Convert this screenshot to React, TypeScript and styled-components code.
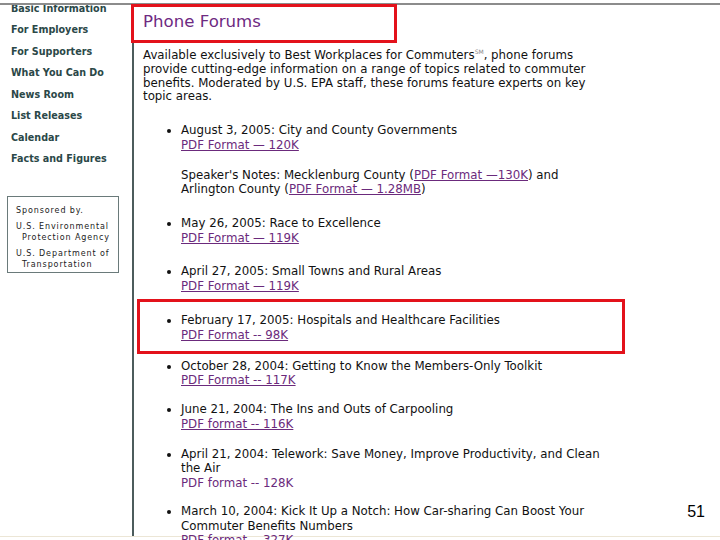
import React from 'react'
import styled, { createGlobalStyle } from 'styled-components'

const GlobalStyle = createGlobalStyle`
    html, body {
        margin: 0;
        padding: 0;
        background: #fff;
    }
`

const colors = {
    nav: '#2b4848',
    rule: '#8c8c8c',
    divider: '#4c5c5c',
    text: '#111',
    link: '#6b2a7c',
    heading: '#6e2a82',
    red: '#e3121b',
}

const navItems = [
    'Basic Information',
    'For Employers',
    'For Supporters',
    'What You Can Do',
    'News Room',
    'List Releases',
    'Calendar',
    'Facts and Figures',
]

type Forum = {
    title: string[]
    link: string
    underline?: boolean
    gap: number
    notes?: boolean
}

const forums: Forum[] = [
    { title: ['August 3, 2005: City and County Governments'], link: 'PDF Format — 120K', gap: 19, notes: true },
    { title: ['May 26, 2005: Race to Excellence'], link: 'PDF Format — 119K', gap: 19.5 },
    { title: ['April 27, 2005: Small Towns and Rural Areas'], link: 'PDF Format — 119K', gap: 19 },
    { title: ['February 17, 2005: Hospitals and Healthcare Facilities'], link: 'PDF Format -- 98K', gap: 20 },
    { title: ['October 28, 2004: Getting to Know the Members-Only Toolkit'], link: 'PDF Format -- 117K', gap: 16.5 },
    { title: ['June 21, 2004: The Ins and Outs of Carpooling'], link: 'PDF format -- 116K', gap: 14.5 },
    { title: ['April 21, 2004: Telework: Save Money, Improve Productivity, and Clean', 'the Air'], link: 'PDF format -- 128K', underline: false, gap: 15.5 },
    { title: ['March 10, 2004: Kick It Up a Notch: How Car-sharing Can Boost Your', 'Commuter Benefits Numbers'], link: 'PDF format -- 327K', gap: 14 },
]

const App: React.FC = () => {
    return (
        <Page>
            <GlobalStyle />
            <TopRule />
            <Body>
                <Sidebar>
                    <NavList>
                        {navItems.map((item) => (
                            <NavItem key={item}>{item}</NavItem>
                        ))}
                    </NavList>
                    <SponsorBox>
                        <SponsorLine>Sponsored by.</SponsorLine>
                        <SponsorLine $top={5}>U.S. Environmental</SponsorLine>
                        <SponsorLine $indent>Protection Agency</SponsorLine>
                        <SponsorLine $top={5}>U.S. Department of</SponsorLine>
                        <SponsorLine $indent>Transportation</SponsorLine>
                    </SponsorBox>
                </Sidebar>
                <Main>
                    <Heading>Phone Forums</Heading>
                    <Intro>
                        <Line>Available exclusively to Best Workplaces for Commuters<Sup>SM</Sup>, phone forums</Line>
                        <Line>provide cutting-edge information on a range of topics related to commuter</Line>
                        <Line>benefits. Moderated by U.S. EPA staff, these forums feature experts on key</Line>
                        <Line>topic areas.</Line>
                    </Intro>
                    <ForumList>
                        {forums.map((f) => (
                            <ForumItem key={f.link + f.title[0]} $gap={f.gap}>
                                {f.title.map((t) => (
                                    <Line key={t}>{t}</Line>
                                ))}
                                <PdfLink href="#" $underline={f.underline !== false}>{f.link}</PdfLink>
                                {f.notes && (
                                    <Notes>
                                        <Line>Speaker's Notes: Mecklenburg County (<PdfLink href="#" $underline>PDF Format —130K</PdfLink>) and</Line>
                                        <Line>Arlington County (<PdfLink href="#" $underline>PDF Format — 1.28MB</PdfLink>)</Line>
                                    </Notes>
                                )}
                            </ForumItem>
                        ))}
                    </ForumList>
                </Main>
            </Body>
            <Highlight style={{ left: 131, top: 4, width: 260, height: 33 }} />
            <Highlight style={{ left: 137, top: 299, width: 482, height: 49 }} />
            <SlideNumber>51</SlideNumber>
        </Page>
    )
}

export default App

const Page = styled.div`
    position: relative;
    width: 720px;
    height: 540px;
    overflow: hidden;
    background: #fff;
    font-family: "DejaVu Sans", Verdana, sans-serif;
`

const TopRule = styled.div`
    height: 3px;
    border-bottom: 2px solid ${colors.rule};
`

const Body = styled.div`
    display: flex;
    height: 531px;
    border-bottom: 1px solid #ece6d6;
`

const Sidebar = styled.div`
    width: 132px;
    flex-shrink: 0;
    border-right: 2px solid ${colors.divider};
    overflow: hidden;
`

const NavList = styled.div`
    display: flex;
    flex-direction: column;
    margin-top: -7.5px;
    padding-left: 11px;
`

const NavItem = styled.div`
    height: 21.5px;
    line-height: 21.5px;
    font-size: 9.6px;
    font-weight: bold;
    color: ${colors.nav};
    white-space: nowrap;
`

const SponsorBox = styled.div`
    margin: 26px 0 0 7px;
    width: 112px;
    height: 77px;
    box-sizing: border-box;
    border: 1px solid #6a7a7a;
    padding: 8px 0 0 8px;
    font-size: 8px;
    letter-spacing: 0.9px;
    color: #222;
`

const SponsorLine = styled.div<{ $indent?: boolean; $top?: number }>`
    line-height: 11px;
    padding-left: ${(p) => (p.$indent ? 6 : 0)}px;
    margin-top: ${(p) => p.$top || 0}px;
    white-space: nowrap;
`

const Main = styled.div`
    flex: 1;
    padding-left: 9px;
    font-size: 11.8px;
    color: ${colors.text};
`

const Heading = styled.h1`
    margin: 8px 0 0;
    font-size: 16.6px;
    line-height: 18px;
    font-weight: normal;
    color: ${colors.heading};
`

const Intro = styled.div`
    margin-top: 18px;
    line-height: 13.8px;
`

const Line = styled.div`
    white-space: nowrap;
`

const Sup = styled.sup`
    font-size: 6px;
    vertical-align: 5px;
    line-height: 0;
    color: #888;
`

const ForumList = styled.ul`
    margin: 0;
    padding: 0 0 0 38px;
    list-style: disc;
`

const ForumItem = styled.li<{ $gap: number }>`
    margin-top: ${(p) => p.$gap}px;
    line-height: 14.5px;
`

const PdfLink = styled.a<{ $underline?: boolean }>`
    color: ${colors.link};
    text-decoration: ${(p) => (p.$underline ? 'underline' : 'none')};
`

const Notes = styled.div`
    margin-top: 15.5px;
`

const Highlight = styled.div`
    position: absolute;
    border: 3px solid ${colors.red};
    pointer-events: none;
`

const SlideNumber = styled.div`
    position: absolute;
    right: 15px;
    top: 503px;
    font-family: "Liberation Sans", Arial, sans-serif;
    font-size: 16px;
    color: #000;
`
